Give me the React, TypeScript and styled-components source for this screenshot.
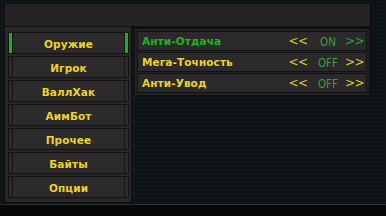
import React from "react";
import styled, { createGlobalStyle } from "styled-components";

const Global = createGlobalStyle`
  html, body { margin: 0; padding: 0; background: #080808; }
  body { width: 386px; height: 216px; overflow: hidden; font-family: "DejaVu Sans", "Liberation Sans", sans-serif; }
`;

const Screen = styled.div`
  width: 386px;
  height: 205px;
  box-sizing: border-box;
  background-color: #0d1315;
  background-image: radial-gradient(#1a2326 0.6px, transparent 0.8px);
  background-size: 4px 4px;
  border-bottom: 1px solid #2e3234;
  padding: 3px 15px 0 4px;
  display: flex;
  flex-direction: column;
`;

const TopBar = styled.div`
  height: 24px;
  background: #252326;
  border: 1px solid #0f0f10;
  box-sizing: border-box;
`;

const Main = styled.div`
  display: flex;
  gap: 2px;
  align-items: flex-start;
`;

const Sidebar = styled.div`
  width: 128px;
  height: 176px;
  box-sizing: border-box;
  background: #29272a;
  border: 1px solid #111112;
  border-top: none;
  padding: 5px 2px 3px 3px;
  display: flex;
  flex-direction: column;
  gap: 2px;
`;

const NavButton = styled.div<{ $active?: boolean }>`
  height: 22px;
  box-sizing: border-box;
  border: 1px solid #121213;
  background: #2c2a2b;
  display: flex;
  align-items: stretch;
  &::before, &::after {
    content: "";
    width: 3px;
    background: ${(p) => (p.$active ? "#19b21e" : "#2c2a2b")};
    border-right: 1px solid #151516;
    flex: none;
  }
  &::after {
    border-right: none;
    border-left: 1px solid #151516;
  }
`;

const NavLabel = styled.span`
  flex: 1;
  display: flex;
  align-items: center;
  justify-content: center;
  color: #ecd32a;
  font-weight: bold;
  font-size: 10.5px;
  letter-spacing: 0.1px;
  padding-top: 1px;
`;

const Content = styled.div`
  width: 236px;
  box-sizing: border-box;
  margin-top: 1px;
  background: #232124;
  border: 1px solid #111112;
  padding: 2px;
  display: flex;
  flex-direction: column;
  gap: 1px;
`;

const Row = styled.div`
  height: 20px;
  box-sizing: border-box;
  background: #2b292b;
  border: 1px solid #121213;
  display: flex;
  align-items: stretch;
  padding-left: 4px;
`;

const RowLabel = styled.span<{ $on?: boolean }>`
  flex: 1;
  display: flex;
  align-items: center;
  color: ${(p) => (p.$on ? "#24b126" : "#ecd32a")};
  font-weight: bold;
  font-size: 10.5px;
  letter-spacing: 0.1px;
`;

const Ctrl = styled.span<{ $w: number; $c: string }>`
  width: ${(p) => p.$w}px;
  display: flex;
  align-items: center;
  justify-content: center;
  color: ${(p) => p.$c};
  font-size: 11.5px;
  font-family: "DejaVu Sans Condensed", "DejaVu Sans", sans-serif;
  padding-top: 1px;
`;

const Arrow = styled(Ctrl)`
  font-size: 12px;
  font-family: "DejaVu Sans", sans-serif;
  letter-spacing: -0.5px;
  padding-top: 0;
`;

const YELLOW = "#dccb2c";
const GREEN = "#2ea52e";
const STATE = "#3f9d3d";

const menu = ["Оружие", "Игрок", "ВаллХак", "АимБот", "Прочее", "Байты", "Опции"];
const opts = [
  { name: "Анти-Отдача", on: true },
  { name: "Мега-Точность", on: false },
  { name: "Анти-Увод", on: false },
];

export default function App() {
  return (
    <>
      <Global />
      <Screen>
        <TopBar />
        <Main>
          <Sidebar>
            {menu.map((m, i) => (
              <NavButton key={m} $active={i === 0}>
                <NavLabel>{m}</NavLabel>
              </NavButton>
            ))}
          </Sidebar>
          <Content>
            {opts.map((o) => (
              <Row key={o.name}>
                <RowLabel $on={o.on}>{o.name}</RowLabel>
                <Arrow $w={30} $c={YELLOW}>&lt;&lt;</Arrow>
                <Ctrl $w={30} $c={STATE}>{o.on ? "ON" : "OFF"}</Ctrl>
                <Arrow $w={23} $c={o.on ? GREEN : YELLOW}>&gt;&gt;</Arrow>
              </Row>
            ))}
          </Content>
        </Main>
      </Screen>
    </>
  );
}
